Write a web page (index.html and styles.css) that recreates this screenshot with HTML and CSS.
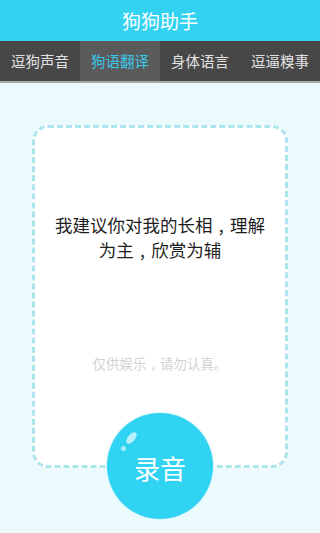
FILE: index.html
```html
<!DOCTYPE html>
<html lang="zh">
<head>
<meta charset="utf-8">
<link rel="stylesheet" href="styles.css">
</head>
<body>
<header class="titlebar">狗狗助手</header>
<nav class="tabs">
  <div class="tab">逗狗声音</div>
  <div class="tab active">狗语翻译</div>
  <div class="tab">身体语言</div>
  <div class="tab">逗逼糗事</div>
</nav>
<main class="main">
  <section class="card">
    <p class="result">我建议你对我的长相<span class="comma">,</span>理解<br>为主<span class="comma">,</span>欣赏为辅</p>
    <p class="note">仅供娱乐<span class="comma">,</span>请勿认真。</p>
  </section>
  <button class="record">
    <span class="shine"></span>
    <span class="dot"></span>
    录音
  </button>
</main>
</body>
</html>
```
FILE: styles.css
```css
html, body {
  margin: 0;
  padding: 0;
}
body {
  width: 320px;
  height: 533px;
  overflow: hidden;
  background: #eafafd;
  font-family: "Noto Sans CJK SC", "Noto Sans", sans-serif;
}
.titlebar {
  height: 41px;
  background: #33d2f1;
  color: #fff;
  font-size: 19px;
  line-height: 41px;
  text-align: center;
}
.tabs {
  display: grid;
  grid-template-columns: repeat(4, 1fr);
  height: 40px;
  background: #474747;
  border-bottom: 2px solid #a9a9a9;
}
.tab {
  color: #e2e2e2;
  font-size: 14.5px;
  line-height: 40px;
  text-align: center;
}
.tab.active {
  background: #5b5a5a;
  color: #38c9ea;
}
.main {
  display: flex;
  flex-direction: column;
  align-items: center;
  padding-top: 42px;
}
.card {
  box-sizing: border-box;
  width: 256px;
  height: 343px;
  background: #fff;
  border: 3px dashed #ade5ef;
  border-radius: 16px;
  margin: 0;
  padding-top: 84px;
  display: flex;
  flex-direction: column;
  align-items: center;
}
.result {
  margin: 0;
  font-size: 17.5px;
  line-height: 25px;
  color: #1e1e1e;
  text-align: center;
}
.comma {
  display: inline-block;
  width: 1em;
  text-align: center;
}
.note {
  margin: 91px 0 0;
  font-size: 13.5px;
  line-height: 20px;
  color: #d2d2d2;
}
.record {
  position: relative;
  margin-top: -55px;
  width: 106px;
  height: 106px;
  border-radius: 50%;
  border: none;
  background: #31d3f2;
  box-shadow: 0 0 0 1px #d8f6fc;
  color: #fff;
  font-family: inherit;
  font-size: 26px;
  line-height: 1;
  padding: 4px 0 0;
}
.shine {
  position: absolute;
  left: 21px;
  top: 18px;
  width: 7px;
  height: 14px;
  border-radius: 50%;
  background: #b6f0fb;
  transform: rotate(40deg);
}
.dot {
  position: absolute;
  left: 14px;
  top: 33px;
  width: 5px;
  height: 5px;
  border-radius: 50%;
  background: #a6ecf9;
}
```
